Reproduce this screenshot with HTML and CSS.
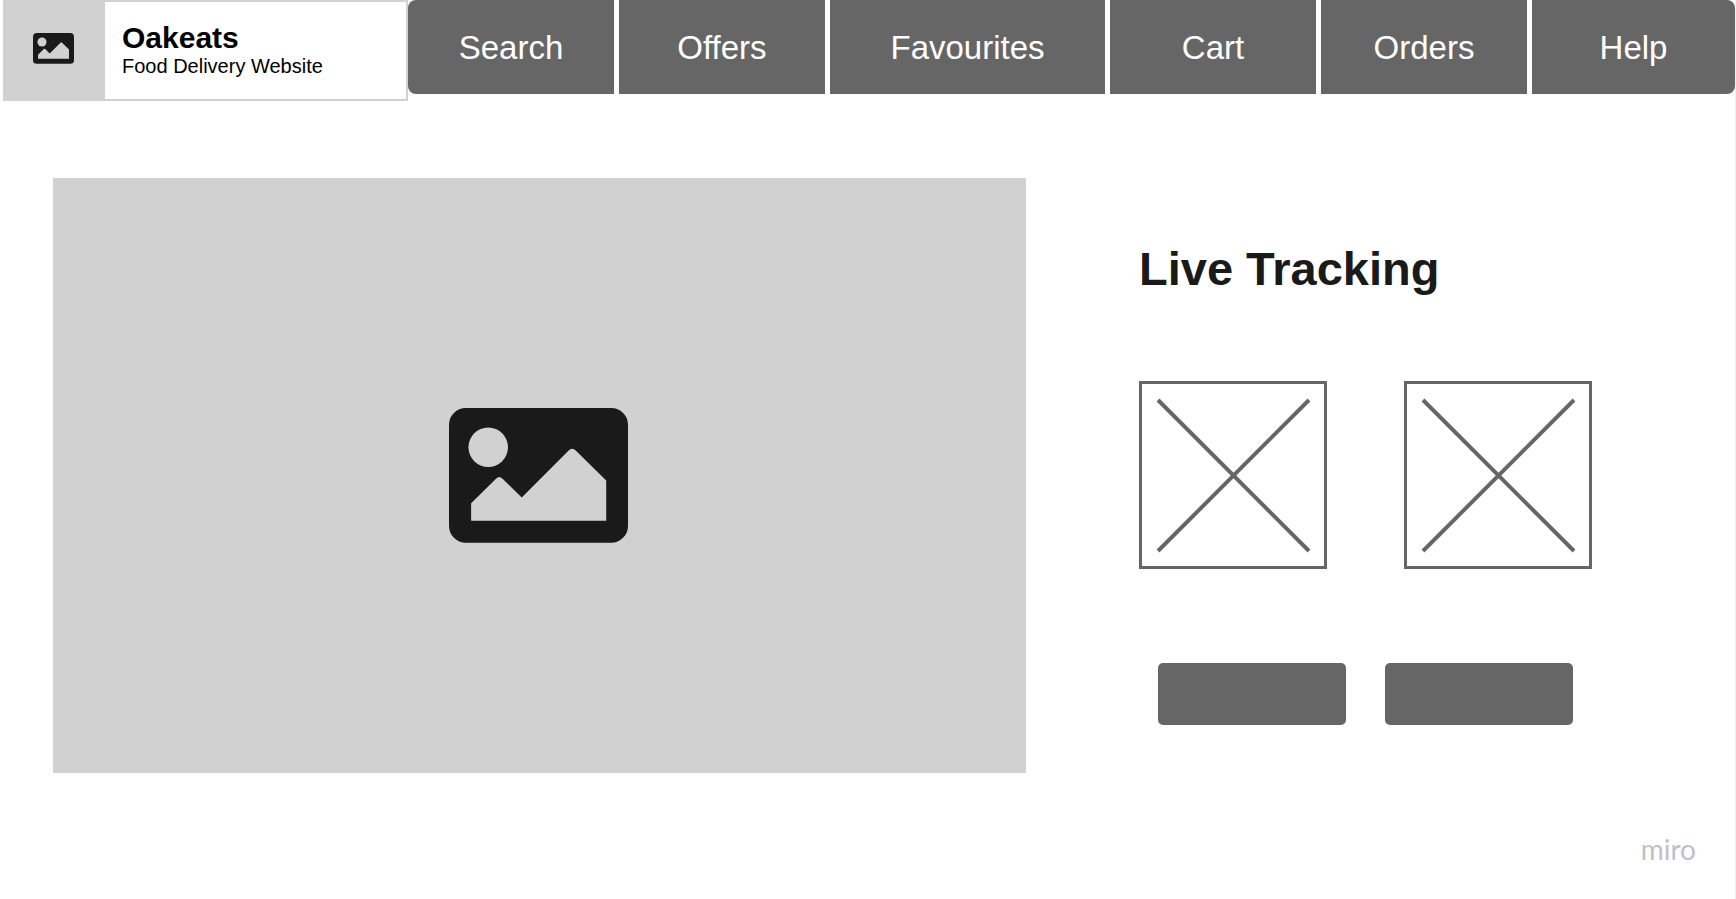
FILE: index.html
```html
<!DOCTYPE html>
<html lang="en">
<head>
    <meta charset="UTF-8">
    <meta name="viewport" content="width=device-width, initial-scale=1.0">
    <title>Oakeats - Live Tracking</title>
    <link rel="stylesheet" href="styles.css">
</head>
<body>
    <div class="page">
        <header class="header">
            <div class="brand">
                <div class="brand-logo">
                    <svg class="logo-icon" viewBox="0 0 534 402" aria-hidden="true">
                        <rect class="icon-frame" width="534" height="402" rx="50"/>
                        <circle class="icon-cut" cx="117" cy="117" r="59"/>
                        <path class="icon-cut" d="M66 284L141 210Q150 201 159 210L217 267L357 127Q367 116 378 127L469 216V336H66Z"/>
                    </svg>
                </div>
                <div class="brand-text">
                    <h1>Oakeats</h1>
                    <p>Food Delivery Website</p>
                </div>
            </div>
            <nav class="nav">
                <a href="#">Search</a>
                <a href="#">Offers</a>
                <a href="#">Favourites</a>
                <a href="#">Cart</a>
                <a href="#">Orders</a>
                <a href="#">Help</a>
            </nav>
        </header>

        <main class="content">
            <div class="map">
                <svg class="map-icon" viewBox="0 0 534 402" aria-hidden="true">
                    <rect class="icon-frame" width="534" height="402" rx="50"/>
                    <circle class="icon-cut" cx="117" cy="117" r="59"/>
                    <path class="icon-cut" d="M66 284L141 210Q150 201 159 210L217 267L357 127Q367 116 378 127L469 216V336H66Z"/>
                </svg>
            </div>

            <section class="tracking">
                <h2>Live Tracking</h2>
                <div class="tiles">
                    <svg class="tile" viewBox="0 0 188 188" aria-hidden="true">
                        <rect x="1.5" y="1.5" width="185" height="185"/>
                        <path d="M19 19L170 170M170 19L19 170"/>
                    </svg>
                    <svg class="tile" viewBox="0 0 188 188" aria-hidden="true">
                        <rect x="1.5" y="1.5" width="185" height="185"/>
                        <path d="M19 19L170 170M170 19L19 170"/>
                    </svg>
                </div>
                <div class="actions">
                    <button type="button" aria-label="Call"></button>
                    <button type="button" aria-label="Message"></button>
                </div>
            </section>
        </main>

        <footer class="footer">miro</footer>
    </div>
</body>
</html>
```
FILE: styles.css
```css
* {
    box-sizing: border-box;
}

body {
    margin: 0;
    font-family: "Liberation Sans", Arial, sans-serif;
    background-color: #fff;
    color: #1a1a1a;
}

h1, h2, p {
    margin: 0;
}

.page {
    min-height: 100vh;
    border-right: 1px solid #f0f0f0;
}

/* header */
.header {
    display: grid;
    grid-template-columns: 405fr 1327fr;
    align-items: start;
    padding-left: 3px;
}

.brand {
    display: flex;
    height: 101px;
    border: 2px solid #d1d1d1;
}

.brand-logo {
    display: flex;
    align-items: center;
    justify-content: center;
    width: 100px;
    padding: 0 4px 4px 0;
    background-color: #d1d1d1;
}

.logo-icon {
    width: 41px;
}

.brand-text {
    display: flex;
    flex-direction: column;
    justify-content: center;
    padding-left: 17px;
    color: #000;
}

.brand-text h1 {
    font-size: 30px;
    line-height: 30px;
}

.brand-text p {
    font-size: 20px;
    line-height: 26px;
}

.nav {
    display: grid;
    grid-template-columns: 206fr 206fr 275fr 206fr 206fr 203fr;
    gap: 5px;
    border-radius: 8px;
    overflow: hidden;
}

.nav a {
    display: flex;
    align-items: center;
    justify-content: center;
    height: 94px;
    padding-top: 2px;
    background-color: #666;
    color: #fff;
    font-size: 33px;
    text-decoration: none;
}

/* main area */
.content {
    display: grid;
    grid-template-columns: 973fr 453fr;
    gap: 113px;
    align-items: start;
    padding: 77px 143px 0 53px;
}

.map {
    display: flex;
    align-items: center;
    justify-content: center;
    aspect-ratio: 973 / 595;
    padding-right: 2px;
    background-color: #d1d1d1;
}

.map-icon {
    width: 179px;
}

.icon-frame {
    fill: #1a1a1a;
}

.icon-cut {
    fill: #d1d1d1;
}

.tracking {
    padding-top: 65px;
}

.tracking h2 {
    font-size: 47px;
    line-height: 52px;
}

.tiles {
    display: grid;
    grid-template-columns: 1fr 1fr;
    gap: 77px;
    margin-top: 86px;
}

.tile {
    display: block;
    width: 100%;
    fill: none;
    stroke: #666;
    stroke-width: 3;
}

.tile path {
    stroke-width: 4;
}

.actions {
    display: grid;
    grid-template-columns: 1fr 1fr;
    gap: 39px;
    margin-top: 94px;
    padding: 0 19px;
}

.actions button {
    height: 62px;
    border: none;
    border-radius: 5px;
    background-color: #666;
    cursor: pointer;
}

.footer {
    padding: 58px 39px 0;
    font-family: Lato, sans-serif;
    font-size: 28px;
    line-height: 36px;
    text-align: right;
    color: #c0bfca;
}
```
